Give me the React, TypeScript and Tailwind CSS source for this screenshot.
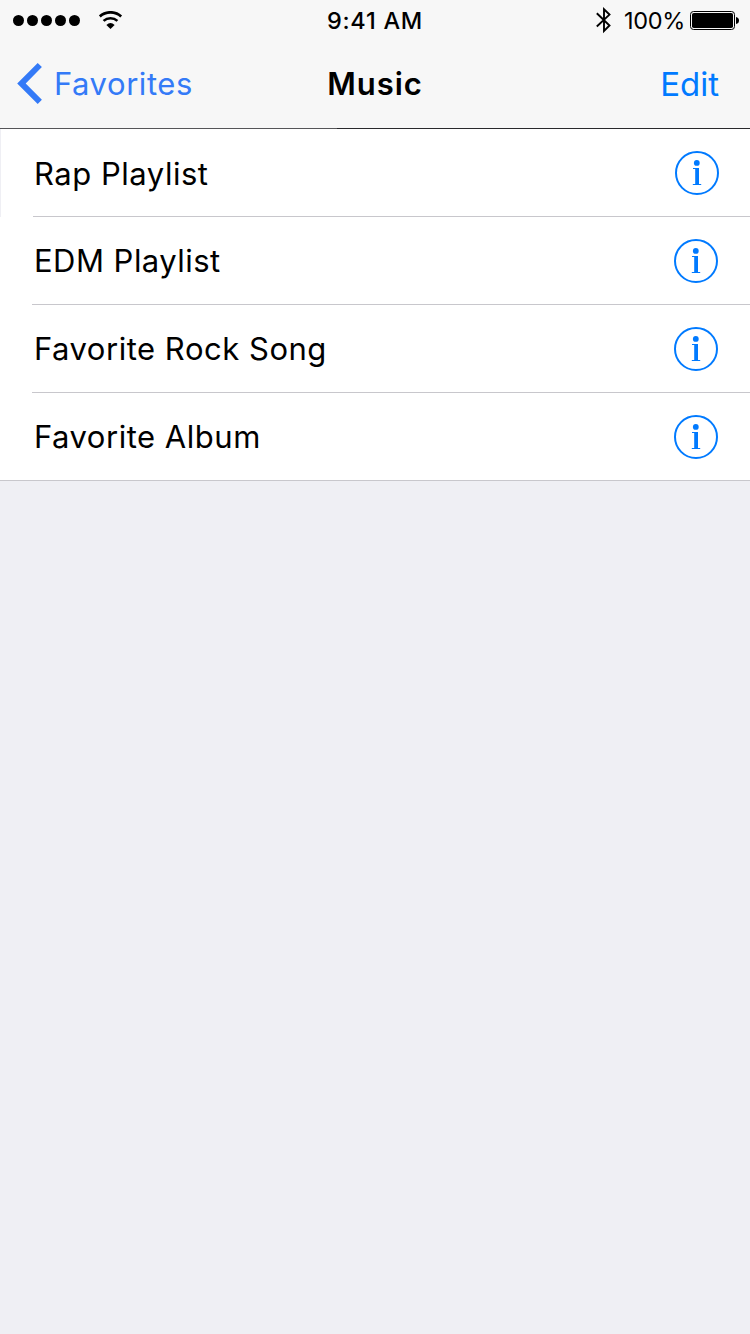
import React from "react";

type Row = { label: string; text: string; first?: boolean; last?: boolean };

const rows: Row[] = [
  { label: "Rap Playlist", text: "pl-px leading-[90px] tracking-[0.52px]", first: true },
  { label: "EDM Playlist", text: "pl-[2px] leading-[88px] tracking-[0.47px]" },
  { label: "Favorite Rock Song", text: "pl-[2px] leading-[88px] tracking-[0.52px]" },
  { label: "Favorite Album", text: "pl-[2px] leading-[88px] tracking-[0.52px]", last: true },
];

function InfoIcon() {
  return (
    <svg width="44" height="44" viewBox="0 0 44 44" fill="none" className="block shrink-0">
      <circle cx="22" cy="22" r="21" stroke="#007aff" strokeWidth="2" />
      <circle cx="21.8" cy="11.9" r="2.9" fill="#007aff" />
      <path d="M18 17H24V33H26.2V34H17.8V33H20.2V18.1H18Z" fill="#007aff" />
    </svg>
  );
}

function WifiIcon() {
  return (
    <svg width="24" height="18" viewBox="0 0 24 18" className="block">
      <path d="M0.8 5.4A16 16 0 0 1 22.2 5.4" fill="none" stroke="#000" strokeWidth="2.7" />
      <path d="M4.6 9.9A10.2 10.2 0 0 1 18.4 9.9" fill="none" stroke="#000" strokeWidth="2.6" />
      <path d="M11.5 18L7.4 14Q11.5 10.2 15.6 14Z" fill="#000" />
    </svg>
  );
}

function BluetoothIcon() {
  return (
    <svg width="16" height="28" viewBox="0 0 16 28" fill="none" className="block">
      <path d="M0.8 7.3L13.5 19.5L8 25V3.2L13.5 8.6L0.8 20.5" stroke="#000" strokeWidth="1.9" />
    </svg>
  );
}

function BatteryIcon() {
  return (
    <svg width="50" height="20" viewBox="0 0 50 20" className="block">
      <rect x="0.5" y="0.5" width="44" height="18" rx="3" fill="none" stroke="#000" />
      <rect x="2" y="2" width="41" height="15" rx="1.8" fill="#000" />
      <path d="M46 6Q49 6.5 49 9.5Q49 12.5 46 13Z" fill="#000" />
    </svg>
  );
}

export default function App() {
  return (
    <div className="flex h-[1334px] w-[750px] flex-col overflow-hidden bg-[#efeff4] font-['Inter',sans-serif] text-black">
      <header className="h-[129px] bg-[#f7f7f7]">
        <div className="grid h-10 grid-cols-3">
          <div className="flex pl-[13px]">
            <div className="flex gap-[3px] pt-[15px]">
              {[0, 1, 2, 3, 4].map((n) => (
                <span key={n} className="size-[11px] rounded-full bg-black" />
              ))}
            </div>
            <div className="pt-[11px] pl-[19px]">
              <WifiIcon />
            </div>
          </div>
          <div className="text-center text-[23.5px] leading-[41px] font-medium tracking-[0.75px]">9:41 AM</div>
          <div className="flex justify-end pr-[10px]">
            <div className="pt-[6px]">
              <BluetoothIcon />
            </div>
            <span className="ml-[12px] w-[66px] text-[23.5px] leading-[41px] tracking-[-0.3px] whitespace-nowrap">100%</span>
            <div className="pt-[11px]">
              <BatteryIcon />
            </div>
          </div>
        </div>
        <div className="grid h-[88px] grid-cols-3">
          <a className="flex pl-[17px] text-[#347af7]">
            <svg width="26" height="42" viewBox="0 0 26 42" className="mt-[22px] block">
              <path d="M0.2 21.4L20.7 0.9L24.9 5.1L8.7 21.4L24.9 37.7L20.7 41.9Z" fill="currentColor" />
            </svg>
            <span className="ml-[11px] text-[31px] leading-[88px] tracking-[0.56px]">Favorites</span>
          </a>
          <h1 className="text-center text-[31px] leading-[88px] font-semibold tracking-[0.95px]">Music</h1>
          <a className="pr-[31px] text-right text-[33px] leading-[89px] text-[#007aff]">Edit</a>
        </div>
        <div className="flex h-px">
          <div className="w-[337px] bg-[#555558]" />
          <div className="flex-1 bg-[#29292c]" />
        </div>
      </header>
      <ul className="bg-white">
        {rows.map((row) => (
          <li
            key={row.label}
            className={
              row.first
                ? "flex h-[88px] border-l border-[#efeff4] pl-8"
                : row.last
                  ? "flex h-[88px] border-b border-[#c8c7cc] pl-8"
                  : "flex h-[88px] pl-8"
            }
          >
            <div
              className={
                row.last
                  ? "flex flex-1 justify-between pr-8"
                  : row.first
                    ? "flex flex-1 justify-between border-b border-[#c8c7cc] pr-[31px]"
                    : "flex flex-1 justify-between border-b border-[#c8c7cc] pr-8"
              }
            >
              <span className={"text-[31px] whitespace-nowrap " + row.text}>{row.label}</span>
              <div className="pt-[22px]">
                <InfoIcon />
              </div>
            </div>
          </li>
        ))}
      </ul>
    </div>
  );
}
